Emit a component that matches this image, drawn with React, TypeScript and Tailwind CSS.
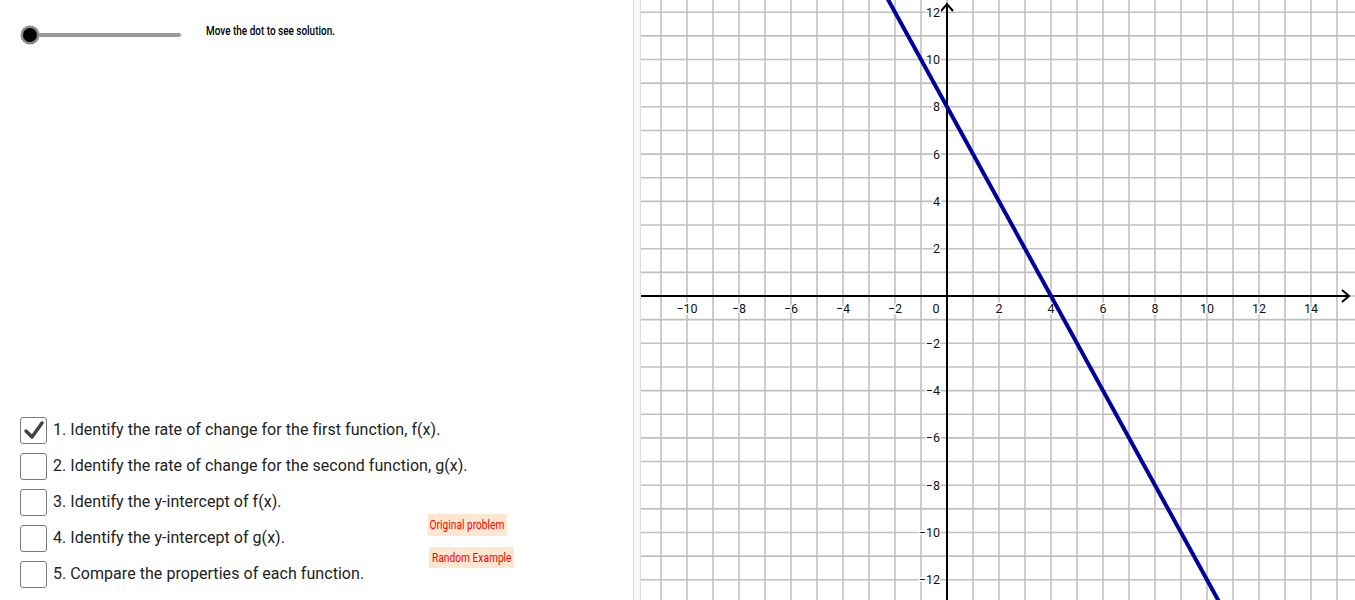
import React from 'react';

const OX = 306;
const OY = 296;
const UX = 26;
const UY = 23.65;

const px = (x: number) => OX + x * UX;
const py = (y: number) => OY - y * UY;

const steps = [
  '1. Identify the rate of change for the first function, f(x).',
  '2. Identify the rate of change for the second function, g(x).',
  '3. Identify the y-intercept of f(x).',
  '4. Identify the y-intercept of g(x).',
  '5. Compare the properties of each function.',
];

function Slider() {
  return (
    <svg width="170" height="24" viewBox="0 0 170 24" className="block">
      <line x1="10" y1="12" x2="160" y2="12" stroke="#9a9a9a" strokeWidth="4" />
      <path d="M158 9.5 L162 12 L158 14.5 Z" fill="#9a9a9a" />
      <circle cx="10" cy="12" r="9.5" fill="#8a8a8a" />
      <circle cx="10" cy="12" r="7" fill="#000" />
    </svg>
  );
}

function Checkbox({ checked }: { checked: boolean }) {
  return (
    <div className="w-[27px] h-[27px] shrink-0 rounded-[3px] border border-[#7a7a7a] bg-white flex items-center justify-center">
      {checked && (
        <svg width="22" height="20" viewBox="0 0 22 20">
          <path d="M3 11 L9 17 L19 3" fill="none" stroke="#444" strokeWidth="3.5" strokeLinecap="round" strokeLinejoin="round" />
        </svg>
      )}
    </div>
  );
}

function Graph() {
  const xs = Array.from({ length: 27 }, (_, i) => i - 11);
  const ys = Array.from({ length: 25 }, (_, i) => i - 12);
  const xLabels = [-10, -8, -6, -4, -2, 2, 4, 6, 8, 10, 12, 14];
  const yLabels = [12, 10, 8, 6, 4, 2, -2, -4, -6, -8, -10, -12];
  const label = (n: number) => (n < 0 ? '\u2212' + Math.abs(n) : String(n));

  return (
    <svg width="714" height="600" viewBox="0 0 714 600" className="block" style={{ fontFamily: 'Roboto, "Liberation Sans", sans-serif' }}>
      {xs.map((k) => (
        <line key={'v' + k} x1={px(k)} y1="0" x2={px(k)} y2="600" stroke="#c0c0c0" strokeWidth="1.6" />
      ))}
      {ys.map((k) => (
        <line key={'h' + k} x1="0" y1={py(k)} x2="714" y2={py(k)} stroke="#c0c0c0" strokeWidth="1.6" />
      ))}

      {/* axes */}
      <line x1="0" y1={OY} x2="708" y2={OY} stroke="#000" strokeWidth="2" />
      <path d={`M701 ${OY - 6} L708 ${OY} L701 ${OY + 6}`} fill="none" stroke="#000" strokeWidth="2" />
      <line x1={OX} y1="600" x2={OX} y2="4" stroke="#000" strokeWidth="2" />
      <path d={`M${OX - 6} 11 L${OX} 4 L${OX + 6} 11`} fill="none" stroke="#000" strokeWidth="2" />

      {xLabels.map((n) => (
        <text key={'xl' + n} x={px(n)} y={OY + 16.5} fontSize="12.5" textAnchor="middle" fill="#111" stroke="#fff" strokeWidth="3" paintOrder="stroke">
          {label(n)}
        </text>
      ))}
      <text x={OX - 11} y={OY + 16.5} fontSize="12.5" textAnchor="middle" fill="#111">0</text>
      {yLabels.map((n) => (
        <text key={'yl' + n} x={OX - 7} y={py(n) + 4.5} fontSize="12.5" textAnchor="end" fill="#111" stroke="#fff" strokeWidth="3" paintOrder="stroke">
          {label(n)}
        </text>
      ))}

      {/* f(x) = -2x + 8 */}
      <line x1={px(-3)} y1={py(14)} x2={px(11)} y2={py(-14)} stroke="#00009a" strokeWidth="4" />
    </svg>
  );
}

export default function App() {
  return (
    <div className="w-[1355px] h-[600px] overflow-hidden bg-white flex" style={{ fontFamily: 'Roboto, "Liberation Sans", sans-serif' }}>
      <div className="w-[633px] h-full flex flex-col">
        <div className="flex items-center pt-[23px] pl-[20px]">
          <Slider />
          <div className="ml-[16px] -mt-[8px] text-[12px] font-medium text-black origin-left scale-x-[0.83] whitespace-nowrap">
            Move the dot to see solution.
          </div>
        </div>

        <div className="mt-auto pb-[8px] pl-[20px] flex items-end">
          <div className="w-[408px] flex flex-col">
            {steps.map((s, i) => (
              <div key={s} className="h-[36px] flex items-center gap-[6px]">
                <Checkbox checked={i === 0} />
                <span className="text-[16px] tracking-[0.05px] text-[#222] whitespace-nowrap">{s}</span>
              </div>
            ))}
          </div>
          <div className="mb-[24px] flex flex-col gap-[11px]">
            <button className="w-[79px] h-[22px] bg-[#fde7d0] text-[#ff0000] text-[12px] flex items-center justify-center whitespace-nowrap">
              <span className="scale-x-[0.85]">Original problem</span>
            </button>
            <button className="ml-[1px] w-[85px] h-[21px] bg-[#fde7d0] text-[#ff0000] text-[12px] flex items-center justify-center whitespace-nowrap">
              <span className="scale-x-[0.85]">Random Example</span>
            </button>
          </div>
        </div>
      </div>

      <div className="w-[8px] h-full bg-[#f7f7f7] border-l border-r border-[#dcdcdc]" />

      <div className="flex-1 h-full">
        <Graph />
      </div>
    </div>
  );
}
